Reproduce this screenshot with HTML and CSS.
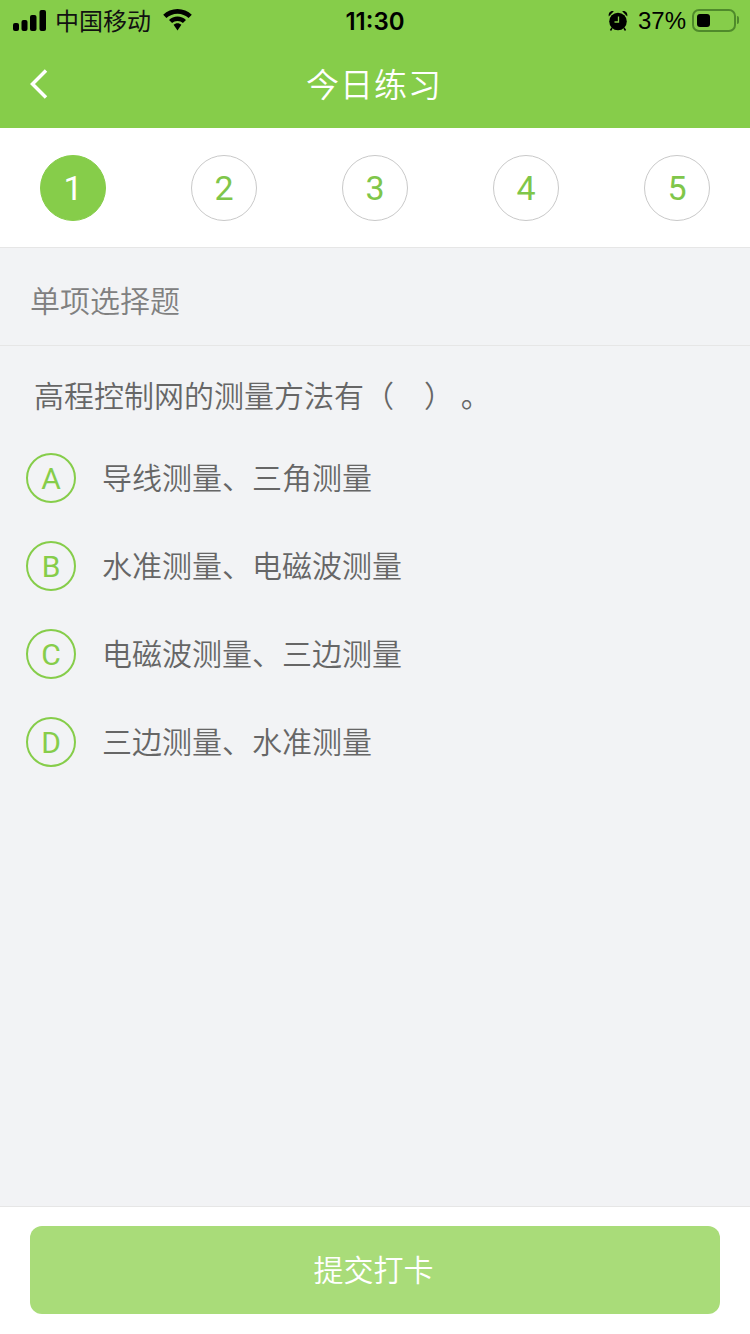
FILE: index.html
```html
<!DOCTYPE html>
<html lang="zh-CN">
<head>
<meta charset="utf-8">
<title>今日练习</title>
<link rel="stylesheet" href="styles.css">
</head>
<body>
<div class="page">
  <header class="header">
    <div class="status">
      <div class="status-left">
        <svg class="signal" width="33" height="21" viewBox="0 0 33 21"><rect x="0" y="13" width="6" height="8" rx="2"/><rect x="8.500" y="10" width="6" height="11" rx="2"/><rect x="17" y="5" width="6.500" height="16" rx="2"/><rect x="26.500" y="0" width="6.500" height="21" rx="2"/></svg>
        <span class="carrier">中国移动</span>
        <svg class="wifi" width="29" height="22" viewBox="0 0 29 22"><path d="M14.500 0C9 0 4 2.200 0.200 5.800L3.400 9C6.300 6.300 10.200 4.700 14.500 4.700S22.700 6.300 25.600 9L28.800 5.800C25 2.200 20 0 14.500 0Z"/><path d="M14.500 7.500C11.200 7.500 8.200 8.800 6 10.900L9.100 14C10.500 12.700 12.400 12 14.500 12S18.500 12.700 19.900 14L23 10.900C20.800 8.800 17.800 7.500 14.500 7.500Z"/><path d="M14.500 14.200C13 14.200 11.600 14.800 10.600 15.700L14.500 21.500L18.400 15.700C17.400 14.800 16 14.200 14.500 14.200Z"/></svg>
      </div>
      <span class="time">11:30</span>
      <div class="status-right">
        <svg class="alarm" width="20" height="21" viewBox="0 0 20 21"><circle cx="10" cy="11.500" r="8.800"/><path d="M0.800 6.500C0 3 2.500 0.300 5.800 1.200Z"/><path d="M19.200 6.500C20 3 17.500 0.300 14.200 1.200Z"/><path d="M4 18L2.500 20.500M16 18L17.500 20.500" stroke="#000" stroke-width="1.500"/><path d="M10.500 6.500V12H6.500" stroke="#86cd4a" stroke-width="1.300" fill="none"/></svg>
        <span class="percent">37%</span>
        <div class="battery"><div class="battery-level"></div></div>
        <div class="battery-nub"></div>
      </div>
    </div>
    <div class="nav">
      <svg class="back" width="20" height="32" viewBox="0 0 20 32"><path d="M17 2.500L3.500 16L17 29.500" fill="none" stroke="#fff" stroke-width="3.500"/></svg>
      <h1 class="title">今日练习</h1>
    </div>
  </header>

  <nav class="steps">
    <div class="step step-active">1</div>
    <div class="step">2</div>
    <div class="step">3</div>
    <div class="step">4</div>
    <div class="step">5</div>
  </nav>

  <main class="main">
    <div class="section">单项选择题</div>
    <p class="question">高程控制网的测量方法有（　）&nbsp;。</p>
    <ul class="options">
      <li class="option"><span class="letter">A</span><span class="option-text">导线测量、三角测量</span></li>
      <li class="option"><span class="letter">B</span><span class="option-text">水准测量、电磁波测量</span></li>
      <li class="option"><span class="letter">C</span><span class="option-text">电磁波测量、三边测量</span></li>
      <li class="option"><span class="letter">D</span><span class="option-text">三边测量、水准测量</span></li>
    </ul>
  </main>

  <footer class="footer">
    <button class="submit" type="button">提交打卡</button>
  </footer>
</div>
</body>
</html>
```
FILE: styles.css
```css
* { box-sizing: border-box; }
html, body { margin: 0; padding: 0; }
body {
  font-family: "Liberation Sans", "Noto Sans CJK SC", sans-serif;
  background: #f2f3f5;
}
.page {
  width: 750px;
  height: 1334px;
  display: flex;
  flex-direction: column;
  overflow: hidden;
}
.header {
  height: 128px;
  background: #86cd4a;
  flex: none;
}
.status {
  height: 40px;
  padding: 0 11px 0 13px;
  display: grid;
  grid-template-columns: 1fr auto 1fr;
  align-items: center;
  color: #000;
}
.status-left { display: flex; align-items: center; }
.signal { margin-right: 9px; }
.carrier { font-size: 24px; line-height: 40px; font-family: "Noto Sans CJK SC", sans-serif; color: #111; }
.wifi { margin-left: 12px; }
.time { font-size: 24px; font-weight: 600; font-family: "Inter", "Liberation Sans", sans-serif; padding-top: 2px; margin-left: -2px; }
.status-right { display: flex; align-items: center; justify-content: flex-end; }
.percent { font-size: 24px; margin-left: 10px; margin-right: 6px; padding-top: 2px; font-family: "Liberation Sans", sans-serif; }
.battery {
  width: 44px;
  height: 23px;
  border: 2px solid #4f8a2b;
  border-radius: 7px;
  padding: 3px;
}
.battery-level { width: 13px; height: 100%; background: #000; border-radius: 3px; }
.battery-nub { width: 2px; height: 8px; background: #4f8a2b; margin-left: 1px; border-radius: 0 2px 2px 0; }
.nav {
  height: 88px;
  display: flex;
  align-items: center;
  justify-content: center;
  position: relative;
}
.back { position: absolute; left: 29px; top: 28px; }
.title {
  margin: 0 2px 3px 0;
  font-size: 33px;
  font-weight: 350;
  color: #fff;
  letter-spacing: 1px;
  font-family: "Noto Sans CJK SC", sans-serif;
}
.steps {
  height: 120px;
  flex: none;
  background: #fff;
  border-bottom: 1px solid #e6e6e6;
  padding: 27px 40px 0;
  display: flex;
  justify-content: space-between;
  align-items: flex-start;
}
.step {
  width: 66px;
  height: 66px;
  border-radius: 50%;
  border: 1px solid #c9c9c9;
  color: #7fc64a;
  font-size: 34px;
  font-family: "Roboto", "Liberation Sans", sans-serif;
  font-weight: 400;
  display: flex;
  align-items: center;
  justify-content: center;
}
.step-active { background: #86cd4a; border-color: #86cd4a; color: #fff; }
.main { flex: 1; min-height: 0; background: #f2f3f5; }
.section {
  height: 98px;
  padding: 4px 30px 0;
  display: flex;
  align-items: center;
  font-size: 30px;
  font-weight: 350;
  color: #808080;
  border-bottom: 1px solid #e6e6e6;
  font-family: "Noto Sans CJK SC", sans-serif;
}
.question {
  margin: 0;
  height: 88px;
  padding: 8px 34px 0;
  display: flex;
  align-items: center;
  font-size: 30px;
  font-weight: 350;
  color: #666;
  font-family: "Noto Sans CJK SC", sans-serif;
}
.options { list-style: none; margin: 0; padding: 0; }
.option {
  height: 88px;
  padding-left: 26px;
  display: flex;
  align-items: center;
}
.letter {
  width: 50px;
  height: 50px;
  flex: none;
  border: 2px solid #86cd4a;
  border-radius: 50%;
  color: #86cd4a;
  font-size: 30px;
  font-family: "Roboto", "Liberation Sans", sans-serif;
  font-weight: 400;
  display: flex;
  align-items: center;
  justify-content: center;
  padding-top: 1px;
}
.option-text {
  margin-left: 26px;
  padding-bottom: 4px;
  font-size: 30px;
  font-weight: 350;
  color: #666;
  font-family: "Noto Sans CJK SC", sans-serif;
}
.footer {
  height: 128px;
  flex: none;
  background: #fff;
  border-top: 1px solid #e6e6e6;
  padding: 19px 30px 0;
}
.submit {
  display: block;
  width: 100%;
  height: 88px;
  padding: 0 3px 4px 0;
  border: 0;
  border-radius: 12px;
  background: #a9dc79;
  color: #fff;
  font-size: 30px;
  font-weight: 350;
  font-family: "Noto Sans CJK SC", sans-serif;
}
```
